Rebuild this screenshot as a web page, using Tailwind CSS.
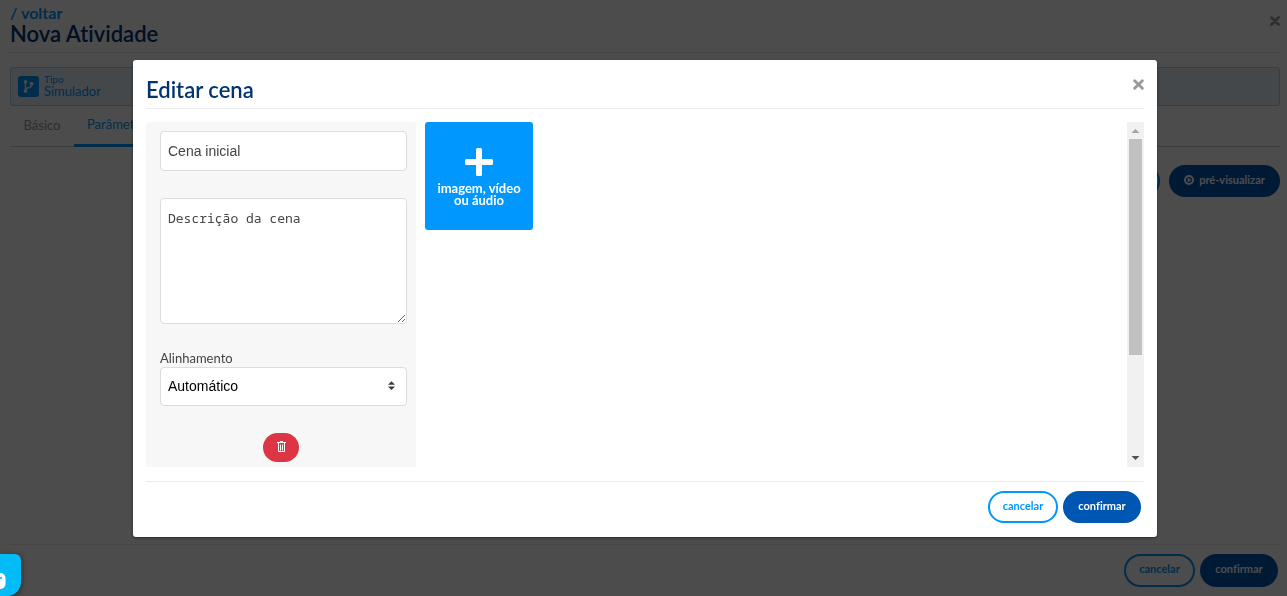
<!DOCTYPE html>
<html lang="pt-BR">
<head>
<meta charset="utf-8">
<meta name="viewport" content="width=device-width, initial-scale=1">
<title>Nova Atividade</title>
<script src="https://cdn.jsdelivr.net/npm/@tailwindcss/browser@4"></script>
</head>
<body class="bg-white font-['Lato','Noto_Sans',sans-serif] text-[13px] text-[#444] [font-variant-ligatures:none]">

<div class="flex min-h-screen flex-col pl-[10px] pr-[7px]">
  <header class="flex items-start justify-between border-b border-[#e8e8e8] pt-1 pb-[6px]">
    <div>
      <a href="#" class="block text-base leading-[18px] font-bold text-[#0098ff]">/ voltar</a>
      <h1 class="text-[22px] leading-6 font-semibold text-[#003571]">Nova Atividade</h1>
    </div>
    <button type="button" aria-label="Fechar atividade" class="mt-3 text-[#999]">
      <svg class="size-[10px]" viewBox="0 0 10 10" fill="none" stroke="currentColor" stroke-width="2.800" stroke-linecap="round"><path d="M1.500 1.500l7 7M8.500 1.500l-7 7"/></svg>
    </button>
  </header>

  <section class="mt-[14px] flex h-[39px] items-center gap-[5px] rounded-[3px] border border-[#a5d3f2] bg-[#e5f0fa] px-[7px] text-[#0098ff]">
    <svg class="size-[21px]" viewBox="0 0 21 21"><rect width="21" height="21" rx="3" fill="#0098ff"/><g fill="none" stroke="#e5f3fd" stroke-width="1.500"><path d="M7.500 6v9M13.500 8v1.500q0 1.500-2 2l-2 .5q-2 .5-2 2"/></g><g fill="#e5f3fd"><circle cx="7.500" cy="5.800" r="1.900"/><circle cx="7.500" cy="15" r="1.900"/><circle cx="13.500" cy="7.700" r="1.900"/></g></svg>
    <div class="pb-[2px]">
      <p class="text-[10px] leading-[10px]">Tipo</p>
      <p class="text-[13px] leading-[14px]">Simulador</p>
    </div>
  </section>

  <nav class="flex h-[41px] items-stretch border-b border-[#ccc]">
    <a href="#" class="flex w-16 items-center justify-center text-[13px] text-[#999]">Básico</a>
    <a href="#" class="-mb-px flex items-center border-b-[3px] border-[#0098ff] px-[13px] text-[13px] text-[#0098ff]">Parâmetros</a>
  </nav>

  <div class="mt-[18px] flex justify-end gap-[9px]">
    <button type="button" class="h-8 rounded-full border-2 border-[#0098ff] px-4 pb-[2px] text-[11px] font-bold text-[#0098ff]">adicionar</button>
    <button type="button" class="flex h-8 w-[111px] items-center justify-center gap-[5px] rounded-full bg-[#0056b3] pb-[2px] text-[11px] font-bold text-white">
      <svg class="size-[10px]" viewBox="0 0 10 10"><circle cx="5" cy="5" r="4" fill="none" stroke="#fff" stroke-width="2"/><path d="M3.700 2.600L7.400 5 3.700 7.400z" fill="#fff"/></svg>
      pré-visualizar
    </button>
  </div>

  <footer class="mt-auto flex h-[52px] items-start justify-end gap-[5px] border-t border-[#e8e8e8] pt-[9px] pr-[2px]">
    <button type="button" class="h-[33px] w-[71px] rounded-full border-2 border-[#0098ff] pb-[2px] text-[11px] font-bold text-[#0098ff]">cancelar</button>
    <button type="button" class="h-[33px] w-[78px] rounded-full bg-[#0056b3] pb-[2px] text-[11px] font-bold text-white">confirmar</button>
  </footer>
</div>

<div class="fixed inset-0 flex items-start justify-center bg-black/70 pt-[60px] pl-[3px]">
  <section role="dialog" aria-modal="true" aria-labelledby="dialog-title" class="w-full max-w-5xl rounded-[3px] bg-white px-[13px] pb-[14px] shadow-[0_1px_3px_rgba(0,0,0,0.5)]">
    <header class="flex items-start justify-between border-b border-[#ebebeb] pt-[18px] pb-[6px]">
      <h2 id="dialog-title" class="text-[22px] leading-6 font-semibold text-[#003571]">Editar cena</h2>
      <button type="button" aria-label="Fechar" class="mt-[1px] text-[#999]">
        <svg class="size-[11px]" viewBox="0 0 10 10" fill="none" stroke="currentColor" stroke-width="2.600" stroke-linecap="round"><path d="M1.500 1.500l7 7M8.500 1.500l-7 7"/></svg>
      </button>
    </header>

    <div class="mt-[13px] flex h-[345px] overflow-hidden">
      <form class="flex w-[270px] shrink-0 flex-col rounded-t-[3px] bg-[#f7f7f7] pt-[9px] pr-[9px] pl-[14px]">
        <input type="text" aria-label="Nome da cena" value="Cena inicial" class="h-10 rounded border border-[#dcdcdc] bg-white px-[7px] font-['Liberation_Sans',sans-serif] text-sm text-[#444]">
        <textarea aria-label="Descrição da cena" class="mt-[27px] h-[126px] resize-y rounded border border-[#dcdcdc] bg-white px-[7px] py-[9px] font-['Noto_Sans_Mono','DejaVu_Sans_Mono',monospace] text-[13px] leading-5 text-[#444]">Descrição da cena</textarea>
        <label for="align" class="mt-[26px] text-[13px] leading-[17px]">Alinhamento</label>
        <div class="relative">
          <select id="align" class="h-[39px] w-full appearance-none rounded border border-[#dcdcdc] bg-white px-[7px] pb-[2px] font-['Liberation_Sans',sans-serif] text-sm text-black">
            <option>Automático</option>
          </select>
          <svg class="pointer-events-none absolute top-[14px] right-[12px] h-[9px] w-[7px]" viewBox="0 0 8 10" fill="#343a40"><path d="M4 0l4 4H0zM0 6h8L4 10z"/></svg>
        </div>
        <button type="button" aria-label="Excluir cena" class="mt-[27px] mr-[5px] flex h-[29px] w-9 items-center justify-center self-center rounded-full bg-[#dc3545] pb-[2px]">
          <svg class="h-[11px] w-[9px]" viewBox="0 0 9 11" fill="none" stroke="#fff"><path d="M0 1.500h9M3 .5h3M1.500 2v8.500h6V2M3.500 3.500v6M5.500 3.500v6"/></svg>
        </button>
      </form>
      <button type="button" class="ml-[9px] flex size-[108px] flex-col items-center rounded-[3px] bg-[#0098ff] pt-[26px] text-[13px] leading-3 font-bold text-white">
        <svg class="mb-[6px] size-7" viewBox="0 0 28 28" fill="#fff"><rect x="11" width="6" height="28" rx="1.500"/><rect y="11" width="28" height="6" rx="1.500"/></svg>
        <span>imagem, vídeo<br>ou áudio</span>
      </button>
      <div aria-hidden="true" class="ml-auto flex w-[17px] flex-col items-center bg-[#f1f1f1]">
        <svg class="h-[17px] w-[17px] shrink-0" viewBox="0 0 17 17" fill="#a3a3a3"><path d="M8.500 7l4 4h-8z"/></svg>
        <div class="h-[216px] w-[13px] bg-[#c1c1c1]"></div>
        <svg class="mt-auto h-[17px] w-[17px] shrink-0" viewBox="0 0 17 17" fill="#505050"><path d="M4.500 6h8l-4 4z"/></svg>
      </div>
    </div>

    <footer class="mt-[14px] flex justify-end gap-[5px] border-t border-[#ebebeb] pt-[9px] pr-[3px]">
      <button type="button" class="h-8 w-[70px] rounded-full border-2 border-[#0098ff] pb-[2px] text-[11px] font-bold text-[#0098ff]">cancelar</button>
      <button type="button" class="h-8 w-[78px] rounded-full bg-[#0056b3] pb-[2px] text-[11px] font-bold text-white">confirmar</button>
    </footer>
  </section>
</div>

<button type="button" aria-label="Abrir chat" class="fixed bottom-0 left-0 h-[42px] w-[21px] overflow-hidden rounded-tr-[6px] rounded-br-[14px] bg-[#03bbf6] shadow-[1px_1px_5px_rgba(0,0,0,0.4)]">
  <svg class="h-[42px] w-[21px]" viewBox="0 0 21 42"><rect x="-12" y="19" width="17.500" height="16" rx="5" fill="#fff"/><path d="M-2 24.500q2 0 4-1" fill="none" stroke="#03bbf6" stroke-width="1.500"/></svg>
</button>
</body>
</html>
